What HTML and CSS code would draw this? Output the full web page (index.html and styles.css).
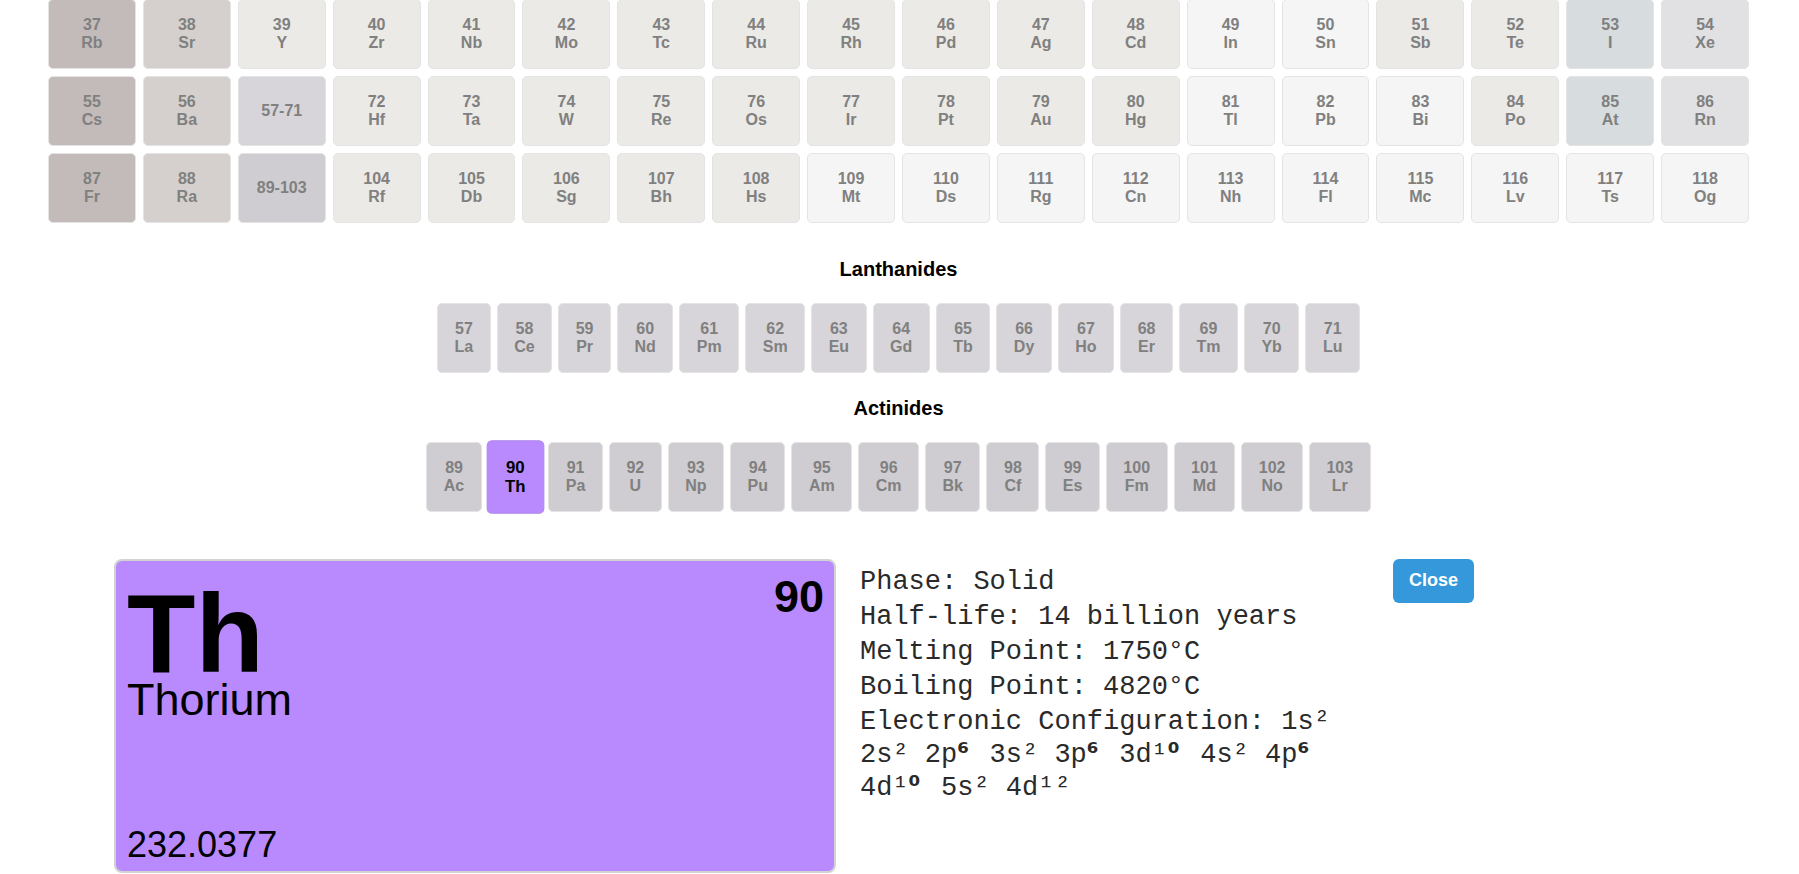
FILE: index.html
```html
<!DOCTYPE html>
<html lang="en">
<head>
    <meta charset="UTF-8">
    <meta name="viewport" content="width=device-width, initial-scale=1.0">
    <title>Periodic Table</title>
    <link rel="stylesheet" href="styles.css">
</head>
<body>
    <div class="page">
        <div class="table">
            <div class="cell alkali"><span>37</span><span>Rb</span></div>
            <div class="cell alkaline"><span>38</span><span>Sr</span></div>
            <div class="cell transition"><span>39</span><span>Y</span></div>
            <div class="cell transition"><span>40</span><span>Zr</span></div>
            <div class="cell transition"><span>41</span><span>Nb</span></div>
            <div class="cell transition"><span>42</span><span>Mo</span></div>
            <div class="cell transition"><span>43</span><span>Tc</span></div>
            <div class="cell transition"><span>44</span><span>Ru</span></div>
            <div class="cell transition"><span>45</span><span>Rh</span></div>
            <div class="cell transition"><span>46</span><span>Pd</span></div>
            <div class="cell transition"><span>47</span><span>Ag</span></div>
            <div class="cell transition"><span>48</span><span>Cd</span></div>
            <div class="cell post"><span>49</span><span>In</span></div>
            <div class="cell post"><span>50</span><span>Sn</span></div>
            <div class="cell metalloid"><span>51</span><span>Sb</span></div>
            <div class="cell metalloid"><span>52</span><span>Te</span></div>
            <div class="cell halogen"><span>53</span><span>I</span></div>
            <div class="cell noble"><span>54</span><span>Xe</span></div>

            <div class="cell alkali"><span>55</span><span>Cs</span></div>
            <div class="cell alkaline"><span>56</span><span>Ba</span></div>
            <div class="cell lanthanide"><span>57-71</span></div>
            <div class="cell transition"><span>72</span><span>Hf</span></div>
            <div class="cell transition"><span>73</span><span>Ta</span></div>
            <div class="cell transition"><span>74</span><span>W</span></div>
            <div class="cell transition"><span>75</span><span>Re</span></div>
            <div class="cell transition"><span>76</span><span>Os</span></div>
            <div class="cell transition"><span>77</span><span>Ir</span></div>
            <div class="cell transition"><span>78</span><span>Pt</span></div>
            <div class="cell transition"><span>79</span><span>Au</span></div>
            <div class="cell transition"><span>80</span><span>Hg</span></div>
            <div class="cell post"><span>81</span><span>Tl</span></div>
            <div class="cell post"><span>82</span><span>Pb</span></div>
            <div class="cell post"><span>83</span><span>Bi</span></div>
            <div class="cell metalloid"><span>84</span><span>Po</span></div>
            <div class="cell halogen"><span>85</span><span>At</span></div>
            <div class="cell noble"><span>86</span><span>Rn</span></div>

            <div class="cell alkali"><span>87</span><span>Fr</span></div>
            <div class="cell alkaline"><span>88</span><span>Ra</span></div>
            <div class="cell actinide"><span>89-103</span></div>
            <div class="cell transition"><span>104</span><span>Rf</span></div>
            <div class="cell transition"><span>105</span><span>Db</span></div>
            <div class="cell transition"><span>106</span><span>Sg</span></div>
            <div class="cell transition"><span>107</span><span>Bh</span></div>
            <div class="cell transition"><span>108</span><span>Hs</span></div>
            <div class="cell post"><span>109</span><span>Mt</span></div>
            <div class="cell post"><span>110</span><span>Ds</span></div>
            <div class="cell post"><span>111</span><span>Rg</span></div>
            <div class="cell post"><span>112</span><span>Cn</span></div>
            <div class="cell post"><span>113</span><span>Nh</span></div>
            <div class="cell post"><span>114</span><span>Fl</span></div>
            <div class="cell post"><span>115</span><span>Mc</span></div>
            <div class="cell post"><span>116</span><span>Lv</span></div>
            <div class="cell post"><span>117</span><span>Ts</span></div>
            <div class="cell post"><span>118</span><span>Og</span></div>
        </div>

        <h3 class="series-title first">Lanthanides</h3>
        <div class="series">
            <div class="cell lanthanide"><span>57</span><span>La</span></div>
            <div class="cell lanthanide"><span>58</span><span>Ce</span></div>
            <div class="cell lanthanide"><span>59</span><span>Pr</span></div>
            <div class="cell lanthanide"><span>60</span><span>Nd</span></div>
            <div class="cell lanthanide"><span>61</span><span>Pm</span></div>
            <div class="cell lanthanide"><span>62</span><span>Sm</span></div>
            <div class="cell lanthanide"><span>63</span><span>Eu</span></div>
            <div class="cell lanthanide"><span>64</span><span>Gd</span></div>
            <div class="cell lanthanide"><span>65</span><span>Tb</span></div>
            <div class="cell lanthanide"><span>66</span><span>Dy</span></div>
            <div class="cell lanthanide"><span>67</span><span>Ho</span></div>
            <div class="cell lanthanide"><span>68</span><span>Er</span></div>
            <div class="cell lanthanide"><span>69</span><span>Tm</span></div>
            <div class="cell lanthanide"><span>70</span><span>Yb</span></div>
            <div class="cell lanthanide"><span>71</span><span>Lu</span></div>
        </div>

        <h3 class="series-title">Actinides</h3>
        <div class="series">
            <div class="cell actinide"><span>89</span><span>Ac</span></div>
            <div class="cell actinide selected"><span>90</span><span>Th</span></div>
            <div class="cell actinide"><span>91</span><span>Pa</span></div>
            <div class="cell actinide"><span>92</span><span>U</span></div>
            <div class="cell actinide"><span>93</span><span>Np</span></div>
            <div class="cell actinide"><span>94</span><span>Pu</span></div>
            <div class="cell actinide"><span>95</span><span>Am</span></div>
            <div class="cell actinide"><span>96</span><span>Cm</span></div>
            <div class="cell actinide"><span>97</span><span>Bk</span></div>
            <div class="cell actinide"><span>98</span><span>Cf</span></div>
            <div class="cell actinide"><span>99</span><span>Es</span></div>
            <div class="cell actinide"><span>100</span><span>Fm</span></div>
            <div class="cell actinide"><span>101</span><span>Md</span></div>
            <div class="cell actinide"><span>102</span><span>No</span></div>
            <div class="cell actinide"><span>103</span><span>Lr</span></div>
        </div>

        <div class="detail">
            <div class="card">
                <div class="card-top">
                    <div>
                        <div class="symbol">Th</div>
                        <div class="name">Thorium</div>
                    </div>
                    <div class="number">90</div>
                </div>
                <div class="weight">232.0377</div>
            </div>
            <div class="info">
                <p>Phase: Solid</p>
                <p>Half-life: 14 billion years</p>
                <p>Melting Point: 1750°C</p>
                <p>Boiling Point: 4820°C</p>
                <p>Electronic Configuration: 1s² 2s² 2p<span class="alt">⁶</span> 3s² 3p<span class="alt">⁶</span> 3d¹<span class="alt">⁰</span> 4s² 4p<span class="alt">⁶</span> 4d¹<span class="alt">⁰</span> 5s² 4d¹²</p>
            </div>
            <button class="close">Close</button>
        </div>
    </div>
</body>
</html>
```

FILE: styles.css
```css
body {
    margin: 0;
    background-color: white;
    font-family: "Liberation Sans", Arial, sans-serif;
}
.page {
    padding: 0 50px 0 48px;
}
.table {
    display: grid;
    grid-template-columns: repeat(18, 1fr);
    gap: 7px;
    margin-top: -1px;
}
.cell {
    height: 70px;
    box-sizing: border-box;
    border: 1px solid #e4e4e4;
    border-radius: 5px;
    display: flex;
    flex-direction: column;
    align-items: center;
    justify-content: center;
    font-size: 16px;
    font-weight: bold;
    color: #808080;
}
.alkali { background-color: #c2bbba; }
.alkaline { background-color: #d5d0cd; }
.transition { background-color: #ebeae6; }
.post { background-color: #f5f5f5; }
.metalloid { background-color: #ebeae7; }
.halogen { background-color: #d7dcdf; }
.noble { background-color: #e1e0e3; }
.lanthanide { background-color: #d7d5d9; }
.actinide { background-color: #cfcdd1; }

.series-title {
    text-align: center;
    font-size: 20px;
    font-weight: bold;
    margin: 24px 0 22px;
}
.series-title.first {
    margin-top: 35px;
}
.series {
    display: flex;
    justify-content: center;
    gap: 6px;
}
.series .cell {
    padding: 0 16.5px;
}
.cell.selected {
    background-color: #b88afd;
    border-color: #b088ee;
    color: black;
    transform: scale(1.05);
}

.detail {
    display: flex;
    align-items: flex-start;
    gap: 24px;
    margin: 47px 0 0 66px;
}
.card {
    width: 722px;
    height: 314px;
    box-sizing: border-box;
    background-color: #b88afd;
    border: 2px solid #d2d2d2;
    border-radius: 8px;
    padding: 13px 10px 8px 11px;
    display: flex;
    flex-direction: column;
}
.card-top {
    display: flex;
    justify-content: space-between;
    align-items: flex-start;
}
.symbol {
    font-size: 112px;
    font-weight: bold;
    line-height: 90px;
    margin-top: 15px;
}
.name {
    font-size: 45px;
    line-height: 41px;
}
.number {
    font-size: 45px;
    font-weight: bold;
    line-height: 1;
}
.weight {
    margin-top: auto;
    font-size: 36px;
    line-height: 36px;
}
.info {
    width: 509px;
    padding-top: 3px;
    font-family: "Liberation Mono", "Courier New", monospace;
    font-size: 27px;
    color: #2a2a2a;
}
.info p {
    margin: 5px 0;
}
.info .alt {
    display: inline-block;
    width: 16.2px;
    font-family: "DejaVu Sans", sans-serif;
    font-weight: bold;
}
.close {
    background-color: #3498db;
    color: white;
    border: none;
    border-radius: 6px;
    padding: 11px 16px 12px;
    font: bold 18px "Liberation Sans", Arial, sans-serif;
    cursor: pointer;
}
```
